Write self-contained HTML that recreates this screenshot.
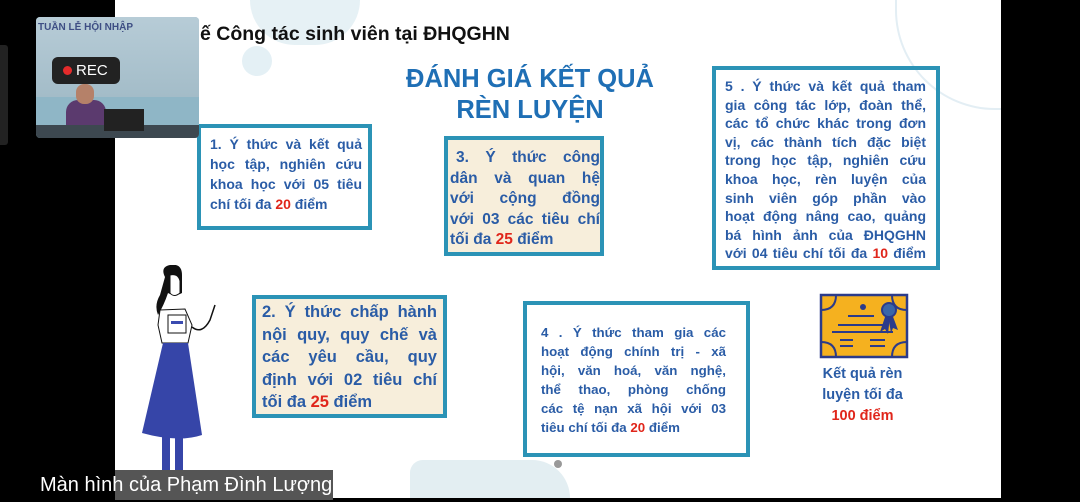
<!DOCTYPE html>
<html><head><meta charset="utf-8">
<style>
*{margin:0;padding:0;box-sizing:border-box}
html,body{width:1080px;height:502px;overflow:hidden}
body{background:#000;position:relative;font-family:"Liberation Sans",sans-serif}
.slide{position:absolute;left:115px;top:0;width:886px;height:498px;background:#fff;overflow:hidden}
.box{position:absolute;border:4px solid #2b93b6;color:#2a5ca6;font-weight:bold;overflow:hidden}
.l{text-align:justify;text-align-last:justify;white-space:nowrap}
.e{text-align:left;white-space:nowrap}
.r{color:#e0261b}
.abs{position:absolute}
</style></head><body>
<div style="position:absolute;left:0;top:45px;width:8px;height:100px;background:#222;border-radius:0 3px 3px 0"></div>
<div class="slide">
  <div class="abs" style="left:135px;top:0;width:110px;height:45px;border-radius:0 0 60px 60px;background:#e6f1f5"></div>
  <div class="abs" style="left:127px;top:46px;width:30px;height:30px;border-radius:50%;background:#e4f0f5"></div>
  <div class="abs" style="left:780px;top:0;width:106px;height:110px;border-radius:0 0 0 100px;border-left:2px solid #e3eef4;border-bottom:2px solid #e3eef4"></div>
  <div class="abs" style="left:295px;top:460px;width:160px;height:38px;background:#e3eef2;border-radius:20px 60px 0 0"></div>
</div>
<div class="abs" style="left:200px;top:23px;font-size:19.5px;font-weight:bold;color:#111">ế Công tác sinh viên tại ĐHQGHN</div>
<div class="abs" style="left:370px;top:64px;width:320px;text-align:center;font-size:25.5px;font-weight:bold;color:#1f6fb5;line-height:31px">ĐÁNH GIÁ KẾT QUẢ<br>RÈN LUYỆN</div>

<div class="box" style="left:197px;top:124px;width:175px;height:106px;padding:6px 6px 0 9px;font-size:14px;line-height:20px">
<div class="l">1. Ý thức và kết quả</div><div class="l">học tập, nghiên cứu</div><div class="l">khoa học với 05 tiêu</div><div class="e">chí tối đa <span class="r">20</span> điểm</div></div>

<div class="box" style="left:444px;top:136px;width:160px;height:120px;background:#f7eedb;padding:8px 0 0 2px;font-size:15.5px;line-height:20.5px">
<div class="l" style="padding-left:6px">3. Ý thức công</div><div class="l">dân và quan hệ</div><div class="l">với cộng đồng</div><div class="l">với 03 các tiêu chí</div><div class="e">tối đa <span class="r">25</span> điểm</div></div>

<div class="box" style="left:712px;top:66px;width:228px;height:204px;padding:7px 10px 0 9px;font-size:14px;line-height:18.6px">
<div class="l">5 . Ý thức và kết quả tham</div><div class="l">gia công tác lớp, đoàn thể,</div><div class="l">các tổ chức khác trong đơn</div><div class="l">vị, các thành tích đặc biệt</div><div class="l">trong học tập, nghiên cứu</div><div class="l">khoa học, rèn luyện của</div><div class="l">sinh viên góp phần vào</div><div class="l">hoạt động nâng cao, quảng</div><div class="l">bá hình ảnh của ĐHQGHN</div><div class="l">với 04 tiêu chí tối đa <span class="r">10</span> điểm</div></div>

<div class="box" style="left:252px;top:295px;width:195px;height:123px;background:#f7eedb;padding:2px 6px 0 6px;font-size:16.5px;line-height:22.5px">
<div class="l">2. Ý thức chấp hành</div><div class="l">nội quy, quy chế và</div><div class="l">các yêu cầu, quy</div><div class="l">định với 02 tiêu chí</div><div class="e">tối đa <span class="r">25</span> điểm</div></div>

<div class="box" style="left:523px;top:301px;width:227px;height:156px;padding:18px 20px 0 14px;font-size:13.3px;line-height:19px">
<div class="l">4 . Ý thức tham gia các</div><div class="l">hoạt động chính trị - xã</div><div class="l">hội, văn hoá, văn nghệ,</div><div class="l">thể thao, phòng chống</div><div class="l">các tệ nạn xã hội với 03</div><div class="e">tiêu chí tối đa <span class="r">20</span> điểm</div></div>

<div class="abs" style="left:554px;top:460px;width:8px;height:8px;border-radius:50%;background:#999"></div>

<svg class="abs" style="left:818px;top:292px" width="92" height="70" viewBox="0 0 92 70">
<rect x="3" y="3" width="86" height="62" fill="#f5b11f" stroke="#2b3b8a" stroke-width="2.5"/>
<path d="M3 18 Q18 18 18 3 M74 3 Q74 18 89 18 M3 50 Q18 50 18 65 M89 50 Q74 50 74 65" fill="none" stroke="#2b3b8a" stroke-width="2"/>
<circle cx="45" cy="15" r="3" fill="#2b3b8a"/>
<path d="M30 24H56M20 33H65M14 40H75M22 48H35M52 48H67M22 54H35M52 54H67" stroke="#2b3b8a" stroke-width="2"/>
<path d="M68 22L62 40L67 37L70 42L72 24Z" fill="#2b3b8a"/><path d="M74 22L80 38L75 36L73 41L70 24Z" fill="#2b3b8a"/>
<circle cx="71" cy="18" r="7" fill="#3a66a8" stroke="#2b3b8a" stroke-width="2"/>
</svg>
<div class="abs" style="left:790px;top:364px;width:145px;text-align:center;font-size:14.5px;font-weight:bold;color:#2a5ca6;line-height:21px">Kết quả rèn<br>luyện tối đa<br><span class="r">100 điểm</span></div>

<svg class="abs" style="left:130px;top:265px" width="100" height="220" viewBox="0 0 100 220">
<path d="M35 12 Q30 2 40 0 Q52 -2 52 10 L52 28 Q45 32 38 28 Q34 40 28 50 Q24 40 30 30Z" fill="#111"/>
<path d="M40 10 Q48 8 50 16 L50 28 Q44 33 40 28Z" fill="#fff" stroke="#111" stroke-width="1"/>
<path d="M30 45 L55 44 L62 60 L58 78 L32 78 L28 60Z" fill="#fff" stroke="#111"/>
<rect x="38" y="50" width="18" height="18" fill="#fff" stroke="#111"/>
<rect x="41" y="56" width="12" height="3" fill="#3a4bb0"/>
<path d="M62 62 Q72 70 80 55 L85 40" fill="none" stroke="#111" stroke-width="1.5"/>
<path d="M33 78 L58 78 L72 170 Q48 178 12 168Z" fill="#3645a8"/>
<rect x="32" y="170" width="8" height="42" fill="#3645a8"/><rect x="45" y="170" width="8" height="42" fill="#3645a8"/>
<path d="M32 212 L44 212 L40 218 Z M45 212 L60 214 L50 218Z" fill="#111"/>
</svg>

<div class="abs" style="left:36px;top:17px;width:163px;height:121px;background:#8fb6c6;border-radius:4px;overflow:hidden">
  <div class="abs" style="left:0;top:0;width:163px;height:80px;background:linear-gradient(#b7ccd7,#a3bcc8)"></div>
  <div class="abs" style="left:2px;top:5px;font-size:10px;color:#3e4e84;font-weight:bold">TUẦN LỄ HỘI NHẬP</div>
  <div class="abs" style="left:16px;top:40px;width:68px;height:27px;background:#222;border-radius:6px;color:#fff;font-size:15px;line-height:27px;padding-left:24px">REC<span class="abs" style="left:11px;top:9px;width:9px;height:9px;border-radius:50%;background:#e52b2b"></span></div>
  <div class="abs" style="left:30px;top:83px;width:40px;height:38px;background:#5b3a6e;border-radius:12px 12px 0 0"></div>
  <div class="abs" style="left:40px;top:67px;width:18px;height:20px;background:#b58169;border-radius:8px"></div>
  <div class="abs" style="left:0;top:108px;width:163px;height:13px;background:#3d4850"></div>
  <div class="abs" style="left:68px;top:92px;width:40px;height:22px;background:#222"></div>
</div>

<div class="abs" style="left:115px;top:470px;width:218px;height:30px;background:#555"></div>
<div class="abs" style="left:40px;top:473px;font-size:20px;line-height:24px;color:#fff">Màn hình của Phạm Đình Lượng</div>
</body></html>
